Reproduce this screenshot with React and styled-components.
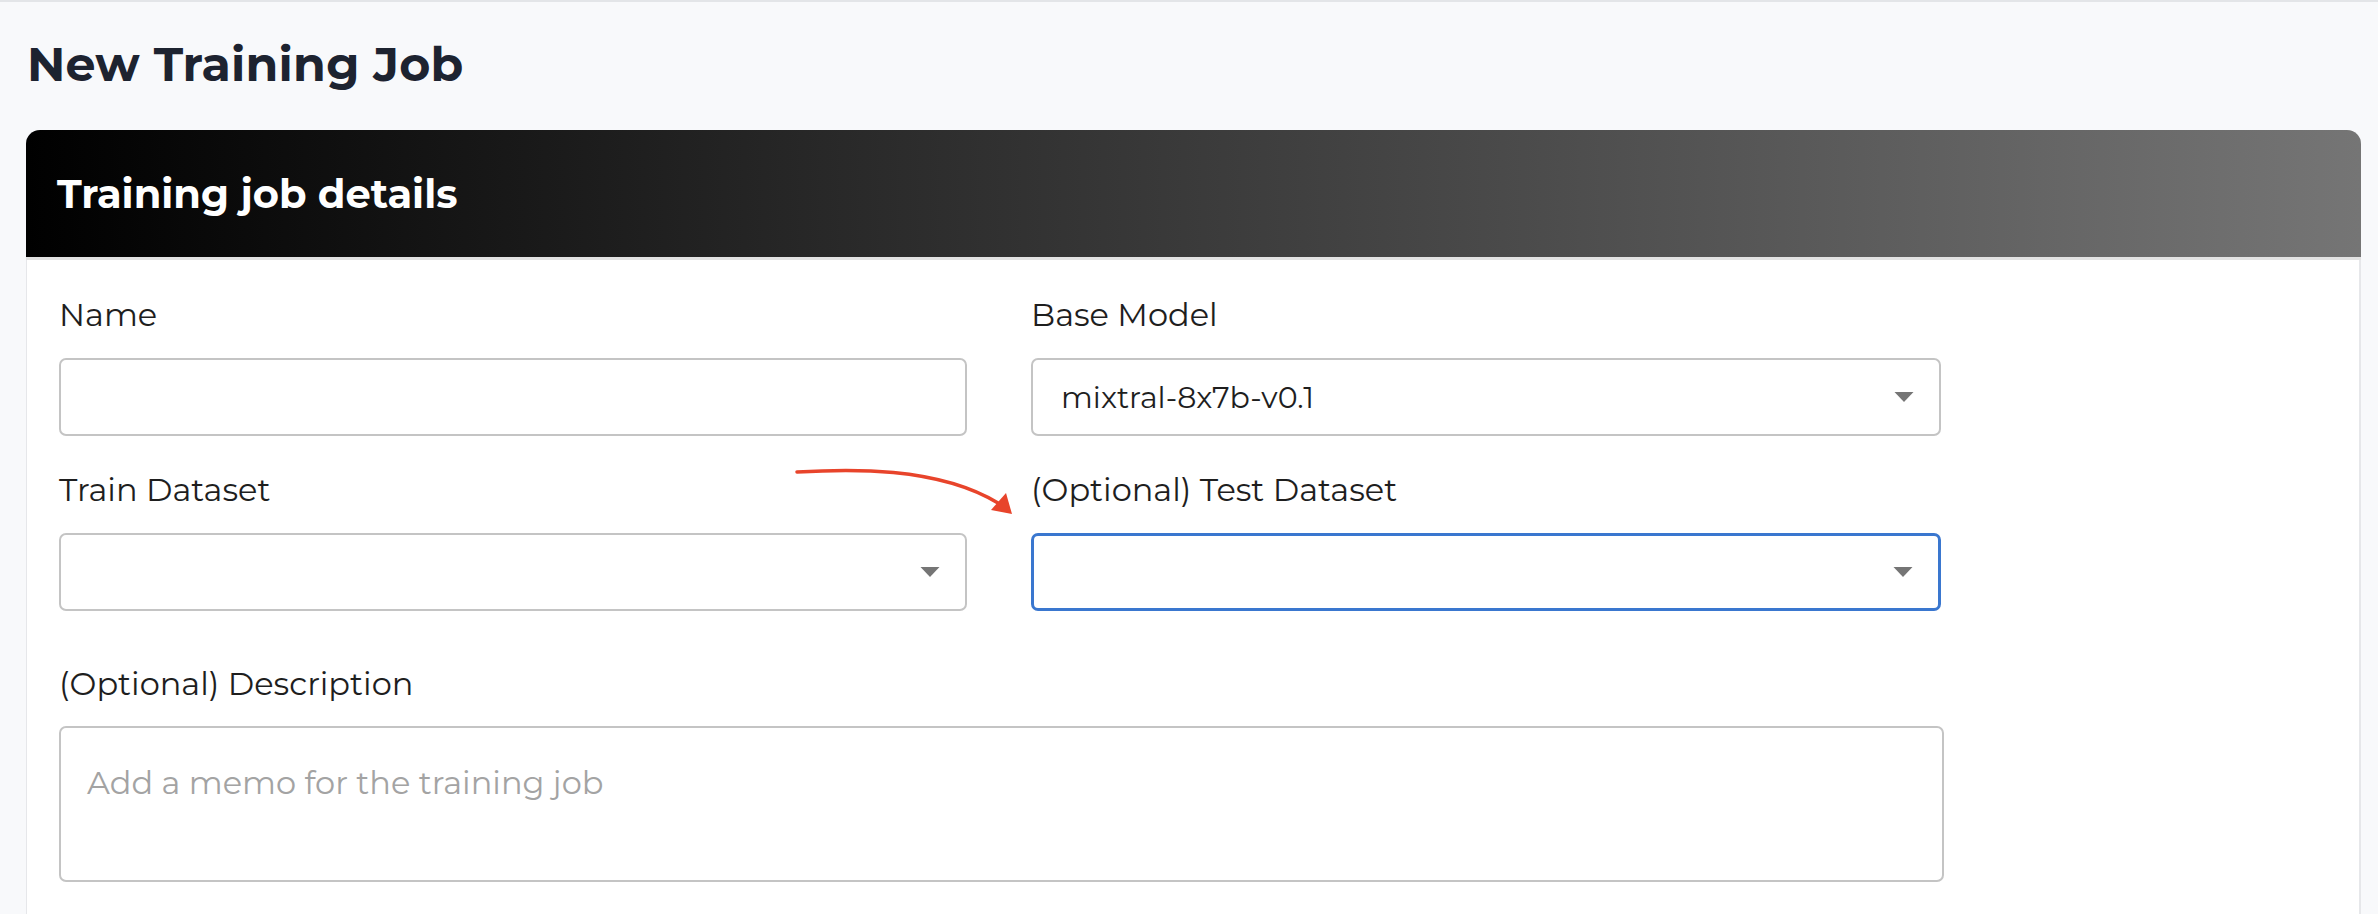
import React from 'react';
import styled, { createGlobalStyle } from 'styled-components';

const GlobalStyle = createGlobalStyle`
  html, body {
    margin: 0;
    padding: 0;
    background: #f8f9fb;
  }
  body {
    font-family: 'Montserrat', 'Inter', 'Noto Sans', sans-serif;
    color: #1f2430;
  }
  * { box-sizing: border-box; }
`;

const Page = styled.div`
  min-height: 914px;
  border-top: 2px solid #e3e5e8;
  padding: 0 17px 0 26px;
  overflow: hidden;
`;

const Title = styled.h1`
  margin: 0;
  padding: 33px 0 0 1px;
  height: 128px;
  font-size: 47.5px;
  font-weight: 700;
  color: #1d2330;
  letter-spacing: 0.2px;
`;

const Card = styled.section`
  background: #ffffff;
  border-radius: 14px 14px 0 0;
  border-left: 1px solid #e6e7ea;
  border-right: 2px solid #e6e7ea;
`;

const CardHeader = styled.div`
  height: 130px;
  display: flex;
  align-items: center;
  padding: 0 31px;
  border-radius: 14px 14px 0 0;
  background: linear-gradient(90deg, #000000 0%, #757575 100%);
  border-bottom: 3px solid #e2e2e2;
  margin-left: -1px;
  margin-right: -2px;
`;

const CardTitle = styled.h2`
  margin: 0;
  font-size: 40px;
  font-weight: 700;
  color: #ffffff;
`;

const CardBody = styled.div`
  position: relative;
  padding: 36px 32px 40px;
`;

const FormGrid = styled.div`
  display: grid;
  grid-template-columns: 908px 910px;
  column-gap: 64px;
  row-gap: 35px;
`;

const Field = styled.div`
  display: flex;
  flex-direction: column;
  gap: ${p => (p.wide ? '23px' : '24px')};
  grid-column: ${p => (p.wide ? '1 / -1' : 'auto')};
  margin-top: ${p => (p.wide ? '19px' : '0')};
`;

const Label = styled.label`
  font-size: 32px;
  font-weight: 400;
  color: #1e1e1e;
  line-height: 38px;
`;

const TextInput = styled.input`
  height: 78px;
  width: 100%;
  border: 2px solid #c4c4c4;
  border-radius: 7px;
  background: #fff;
  padding: 0 26px;
  font: inherit;
  font-size: 30px;
  outline: none;
`;

const SelectBox = styled.div`
  position: relative;
  height: 78px;
  border: ${p => (p.focused ? '3px solid #3a77cf' : '2px solid #c4c4c4')};
  border-radius: 7px;
  background: #fff;
  display: flex;
  align-items: center;
  padding: 0 ${p => (p.focused ? '27px' : '28px')};
  font-size: 30px;
  color: #1e1e1e;
`;

const Caret = styled.svg`
  position: absolute;
  right: 25px;
  top: 50%;
  transform: translateY(-50%);
`;

const TextArea = styled.textarea`
  height: 156px;
  width: 1885px;
  border: 2px solid #c4c4c4;
  border-radius: 7px;
  background: #fff;
  padding: 35px 26px 20px;
  font: inherit;
  font-size: 32px;
  line-height: 40px;
  resize: none;
  outline: none;
  &::placeholder {
    color: #a3a3a3;
  }
`;

const Annotation = styled.svg`
  position: absolute;
  left: 760px;
  top: 198px;
  pointer-events: none;
`;

const Select = ({ value, focused }) => (
  <SelectBox focused={focused}>
    {value}
    <Caret width="20" height="11" viewBox="0 0 20 11">
      <path d="M0.5 0.5 L19.5 0.5 L10 10.5 Z" fill="#757575" />
    </Caret>
  </SelectBox>
);

export default function App() {
  return (
    <>
      <GlobalStyle />
      <Page>
        <Title>New Training Job</Title>
        <Card>
          <CardHeader>
            <CardTitle>Training job details</CardTitle>
          </CardHeader>
          <CardBody>
            <FormGrid>
              <Field>
                <Label>Name</Label>
                <TextInput type="text" />
              </Field>
              <Field>
                <Label>Base Model</Label>
                <Select value="mixtral-8x7b-v0.1" />
              </Field>
              <Field>
                <Label>Train Dataset</Label>
                <Select />
              </Field>
              <Field>
                <Label>(Optional) Test Dataset</Label>
                <Select focused />
              </Field>
              <Field wide>
                <Label>(Optional) Description</Label>
                <TextArea placeholder="Add a memo for the training job" />
              </Field>
            </FormGrid>
            <Annotation width="240" height="70" viewBox="0 0 240 70">
              <path
                d="M10 14 C 60 11, 150 8, 211 45"
                fill="none"
                stroke="#e8442b"
                strokeWidth="3.5"
                strokeLinecap="round"
              />
              <path d="M225 56 L204 52 L219 35 Z" fill="#e8442b" />
            </Annotation>
          </CardBody>
        </Card>
      </Page>
    </>
  );
}
